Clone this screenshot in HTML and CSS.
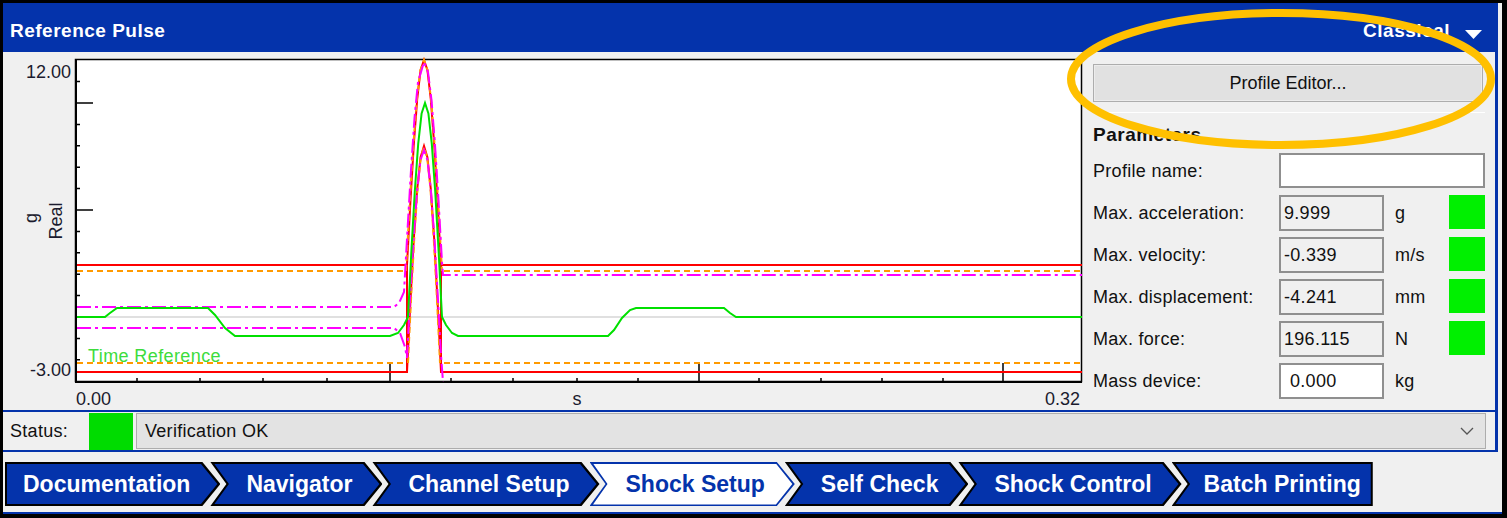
FILE: index.html
```html
<!DOCTYPE html>
<html lang="en">
<head>
    <meta charset="UTF-8">
    <title>Reference Pulse</title>
    <link rel="stylesheet" href="styles.css">
</head>
<body>

<div class="frame">

    <div class="panel">
        <!-- Title bar -->
        <div class="panel-head">
            <span class="panel-title">Reference Pulse</span>
            <span class="mode">Classical
                <svg class="caret" width="17" height="9" viewBox="0 0 17 9"><polygon points="0,0 17,0 8.5,9" fill="#fff"/></svg>
            </span>
        </div>

        <div class="panel-body">
            <!-- Pulse chart -->
            <div class="chart">
                <svg class="plot" viewBox="3 52 1082 358" width="1082" height="358">
                    <rect x="75.5" y="59.5" width="1006" height="322" fill="#fff" stroke="#000" stroke-width="1.5"/>
                    <line x1="77" y1="317" x2="1082" y2="317" stroke="#d6d6d6" stroke-width="1.5"/>

                    <!-- axes and ticks -->
                    <g stroke="#000" fill="none">
                        <line x1="76" y1="59" x2="76" y2="383" stroke-width="2"/>
                        <line x1="75" y1="382" x2="1082" y2="382" stroke-width="2"/>
                        <path stroke-width="1.5" d="M76 81.6h4M76 103h17M76 124.4h4M76 145.8h4M76 167.2h4M76 188.6h4M76 210h17M76 231.4h4M76 252.8h4M76 274.2h4M76 295.6h4M76 317h17M76 338.4h4M76 359.8h4"/>
                        <path stroke-width="1.5" d="M137 382v-4M200 382v-4M263 382v-4M327 382v-4M390 382v-19M451 382v-4M513 382v-4M577 382v-4M638 382v-4M699 382v-19M759 382v-4M821 382v-4M882 382v-4M943 382v-4M1003 382v-19"/>
                    </g>

                    <!-- tolerance bands -->
                    <g fill="none" stroke-width="2">
                        <path stroke="#ff0000" d="M77 265H407V372H77M1082 265H441V372H1082"/>
                        <polyline stroke="#ff0000" points="407,265 410.4,202 413.8,144.5 417.2,99.2 420.6,70 424,60 427.4,70 430.8,99.2 434.2,144.5 437.6,202 441,265"/>
                        <polyline stroke="#ff0000" points="407,372 410.4,302.2 413.8,239.1 417.2,189.2 420.6,157.1 424,146 427.4,157.1 430.8,189.2 434.2,239.1 437.6,302.2 441,372"/>

                        <g stroke="#ff9a00" stroke-dasharray="6 4">
                            <path d="M77 271H405M444 271H1082M77 363H405M444 363H1082"/>
                            <polyline points="406,271 409.6,205.8 413.2,147 416.8,100.3 420.4,70.3 424,60 427.6,70.3 431.2,100.3 434.8,147 438.4,205.8 442,271"/>
                            <polyline points="408,363 411.2,296.3 414.4,236 417.6,188.3 420.8,157.6 424,147 427.2,157.6 430.4,188.3 433.6,236 436.8,296.3 440,363"/>
                        </g>

                        <g stroke="#ff00ff" stroke-dasharray="14 4 3 4">
                            <polyline points="77,307 394,307 399,303 404,292 407.5,230 411,170 414.5,118 418,82 424,62 428,72 431.5,100 435,145 438.5,200 442,262 443,275 1082,275"/>
                            <polyline points="77,328 394,328 400,333 405,347 407,358 410,300 413.5,240 417,192 420.5,160 424,150 427.5,160 431,192 434.5,240 438,300 441,355 443,382"/>
                        </g>

                        <polyline stroke="#00e000" points="77,317 105,317 110,313 117,308 208,308 215,315 225,328 235,336 390,336 398,333 404,325 408,317 411.4,250.9 414.8,191.2 418.2,143.9 421.6,113.5 425,103 428.4,113.5 431.8,143.9 435.2,191.2 438.6,250.9 442,317 446,325 452,333 458,336 608,336 614,330 622,318 630,310 636,308 724,308 730,313 736,317 1082,317"/>
                    </g>

                    <text class="trace-name" x="88" y="362">Time Reference</text>

                    <!-- axis labels -->
                    <text x="71" y="78" text-anchor="end">12.00</text>
                    <text x="71" y="376" text-anchor="end">-3.00</text>
                    <text x="76" y="405">0.00</text>
                    <text x="577" y="405" text-anchor="middle">s</text>
                    <text x="1080" y="405" text-anchor="end">0.32</text>
                    <text transform="translate(31 218) rotate(-90)" text-anchor="middle" dominant-baseline="central">g</text>
                    <text transform="translate(56 221) rotate(-90)" text-anchor="middle" dominant-baseline="central">Real</text>
                </svg>
            </div>

            <!-- Parameters -->
            <div class="params">
                <button class="btn">Profile Editor...</button>
                <div class="sep"></div>
                <div class="params-title">Parameters</div>
                <div class="grid">
                    <span class="label">Profile name:</span>
                    <div class="field wide"></div>

                    <span class="label">Max. acceleration:</span>
                    <div class="field">9.999</div>
                    <span class="unit">g</span>
                    <span class="led"></span>

                    <span class="label">Max. velocity:</span>
                    <div class="field">-0.339</div>
                    <span class="unit">m/s</span>
                    <span class="led"></span>

                    <span class="label">Max. displacement:</span>
                    <div class="field">-4.241</div>
                    <span class="unit">mm</span>
                    <span class="led"></span>

                    <span class="label">Max. force:</span>
                    <div class="field">196.115</div>
                    <span class="unit">N</span>
                    <span class="led"></span>

                    <span class="label">Mass device:</span>
                    <div class="field edit">0.000</div>
                    <span class="unit">kg</span>
                </div>
            </div>
        </div>

        <!-- Status line -->
        <div class="status">
            <span class="status-label">Status:</span>
            <span class="status-led"></span>
            <div class="combo">
                <span>Verification OK</span>
                <svg width="14" height="8" viewBox="0 0 14 8"><polyline points="1,1 7,7 13,1" fill="none" stroke="#555" stroke-width="1.3"/></svg>
            </div>
        </div>
    </div>

    <!-- Workflow steps -->
    <div class="steps">
        <span class="step first">Documentation</span>
        <span class="step">Navigator</span>
        <span class="step">Channel Setup</span>
        <span class="step active">Shock Setup</span>
        <span class="step">Self Check</span>
        <span class="step">Shock Control</span>
        <span class="step last">Batch Printing</span>
    </div>

    <!-- highlight around the profile editor -->
    <svg class="callout" width="440" height="160" viewBox="0 0 440 160">
        <ellipse cx="223" cy="76" rx="210" ry="66" fill="none" stroke="#ffc000" stroke-width="8"/>
    </svg>

</div>

</body>
</html>
```

FILE: styles.css
```css
body {
    margin: 0;
    overflow: hidden;
    background-color: #f0f0f0;
    font-family: "Liberation Sans", Arial, sans-serif;
    color: #111;
}

.frame {
    position: relative;
    width: 1507px;
    height: 518px;
    box-sizing: border-box;
    border: 3px solid #000;
    border-right-width: 5px;
    border-bottom-width: 4px;
    background-color: #f0f0f0;
}

.panel {
    margin-right: 4px;
    border-right: 3px solid #0433ab;
    border-bottom: 2px solid #0433ab;
}

.panel-head {
    height: 49px;
    box-sizing: border-box;
    padding: 7px 13px 0 7px;
    display: flex;
    align-items: center;
    justify-content: space-between;
    background-color: #0433ab;
    color: #fff;
    font-size: 19px;
    font-weight: bold;
    letter-spacing: 0.5px;
}

.mode {
    display: flex;
    align-items: center;
    gap: 15px;
}

.caret {
    margin-top: 6px;
}

.panel-body {
    display: flex;
    height: 358px;
}

.chart {
    flex: none;
    width: 1082px;
}

.chart svg {
    display: block;
}

.plot text {
    font-family: "Liberation Sans", Arial, sans-serif;
    font-size: 18px;
    fill: #1b1b2e;
}

.plot .trace-name {
    fill: #3cdc3c;
    letter-spacing: 0.4px;
}

.params {
    flex: 1;
    padding: 12px 10px 0 8px;
}

.btn {
    display: block;
    width: 390px;
    height: 38px;
    background-color: #e1e1e1;
    border: 1px solid #adadad;
    box-shadow: inset 0 0 0 1px #ececec;
    font-family: "Liberation Sans", Arial, sans-serif;
    font-size: 18px;
    color: #111;
}

.sep {
    height: 1px;
    margin-top: 10px;
    background-color: #fff;
}

.params-title {
    margin-top: 11px;
    line-height: 22px;
    font-size: 19px;
    font-weight: bold;
    letter-spacing: 0.5px;
}

.grid {
    margin-top: 7px;
    display: grid;
    grid-template-columns: 186px 105px 1fr 36px;
    grid-auto-rows: 36px;
    row-gap: 6px;
    align-items: center;
    font-size: 18px;
    letter-spacing: 0.3px;
}

.field {
    height: 36px;
    box-sizing: border-box;
    padding-left: 3px;
    display: flex;
    align-items: center;
    border: 2px solid #8f8f8f;
    background-color: #f0f0f0;
}

.field.wide {
    grid-column: 2 / 5;
    height: 35px;
    align-self: start;
    background-color: #fff;
}

.field.edit {
    padding-left: 9px;
    background-color: #fff;
}

.unit {
    padding-left: 11px;
}

.led {
    height: 34px;
    align-self: start;
    background-color: #00f000;
}

.status {
    display: flex;
    height: 38px;
    border-top: 2px solid #0433ab;
    font-size: 18px;
    letter-spacing: 0.3px;
}

.status-label {
    width: 86px;
    box-sizing: border-box;
    padding-left: 7px;
    display: flex;
    align-items: center;
}

.status-led {
    width: 44px;
    margin: 1px 3px 0 0;
    background-color: #00dc00;
}

.combo {
    flex: 1;
    margin: 1px 9px 1px 0;
    padding: 0 11px 0 8px;
    display: flex;
    align-items: center;
    justify-content: space-between;
    border: 1px solid #adadad;
    background-color: #e3e3e3;
}

.steps {
    display: flex;
    padding: 10px 0 6px 2px;
    border-bottom: 2px solid #0433ab;
}

.step {
    position: relative;
    isolation: isolate;
    height: 44px;
    margin-left: -10px;
    padding: 0 30px 0 36px;
    display: flex;
    align-items: center;
    background-color: #000;
    color: #fff;
    font-size: 23px;
    font-weight: bold;
    white-space: nowrap;
    clip-path: polygon(0 0, calc(100% - 18px) 0, 100% 50%, calc(100% - 18px) 100%, 0 100%, 16px 50%);
}

.step::before {
    content: "";
    position: absolute;
    inset: 2px;
    z-index: -1;
    background-color: #0433ab;
    clip-path: polygon(2px 0, calc(100% - 17.4px) 0, calc(100% - 1px) 50%, calc(100% - 17.4px) 100%, 2px 100%, 16.5px 50%);
}

.step.first {
    margin-left: 0;
    padding-left: 18px;
    clip-path: polygon(0 0, calc(100% - 18px) 0, 100% 50%, calc(100% - 18px) 100%, 0 100%);
}

.step.first::before {
    clip-path: polygon(0 0, calc(100% - 17.4px) 0, calc(100% - 1px) 50%, calc(100% - 17.4px) 100%, 0 100%);
}

.step.last {
    padding-left: 32px;
    padding-right: 12px;
    clip-path: polygon(0 0, 100% 0, 100% 100%, 0 100%, 16px 50%);
}

.step.last::before {
    clip-path: polygon(2px 0, 100% 0, 100% 100%, 2px 100%, 16.5px 50%);
}

.step.active {
    background-color: #0433ab;
    color: #0433ab;
}

.step.active::before {
    inset: 1.5px;
    background-color: #fff;
}

.callout {
    position: absolute;
    left: 1055px;
    top: 0;
}
```
